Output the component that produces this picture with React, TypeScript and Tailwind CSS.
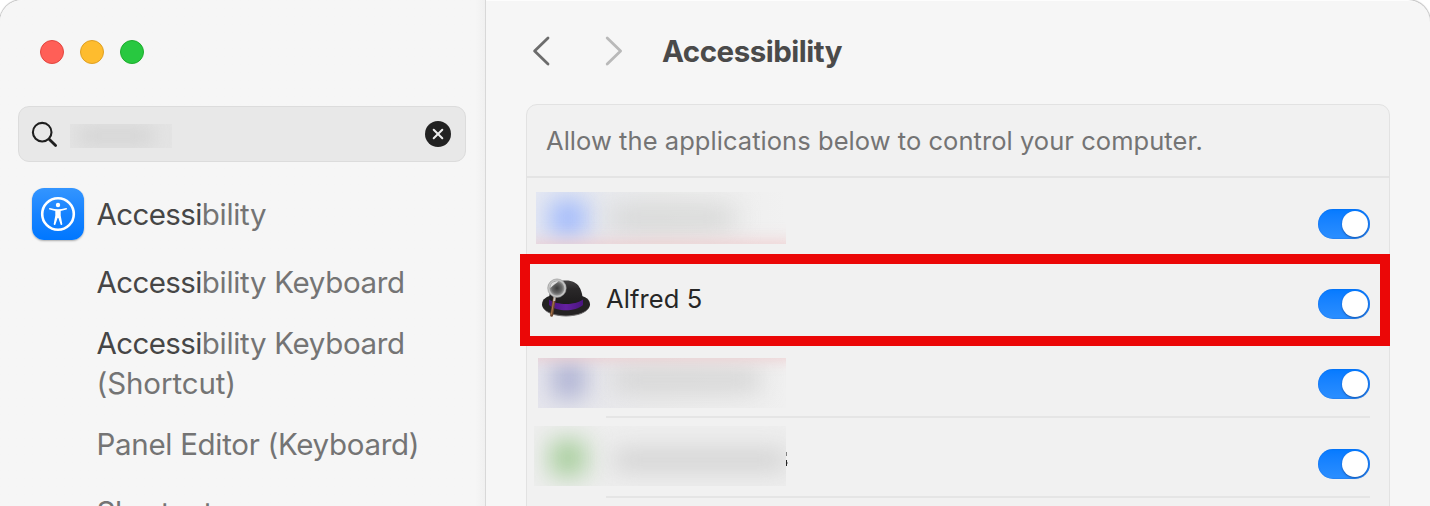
import React from "react";

function Toggle() {
  return (
    <div className="flex h-[30px] w-[52px] shrink-0 items-center justify-end rounded-full bg-linear-to-b from-[#047aff] to-[#2b8fff] pr-[2px] shadow-[inset_0_0_1px_0.5px_rgba(0,90,210,0.35)]">
      <div className="size-[26px] rounded-full bg-white shadow-[0_1px_2px_rgba(0,30,90,0.5)]" />
    </div>
  );
}

function AccessibilityIcon() {
  return (
    <div className="flex size-[52px] shrink-0 items-center justify-center rounded-[12px] bg-linear-to-b from-[#3395ff] via-[#1683ff] to-[#0077ff] shadow-[0_1px_2px_rgba(0,0,0,0.3)]">
      <svg width="36" height="36" viewBox="0 0 36 36" fill="none">
        <circle cx="18" cy="18" r="15.8" stroke="white" strokeWidth="2.6" />
        <circle cx="18" cy="9" r="2.2" fill="white" />
        <path
          d="M9.9 12.1 Q14.5 13.3 18 13.3 Q21.5 13.3 26.1 12.1 A.75 .75 0 0 1 26.4 13.6 L20.7 15 V19.5 L22.3 28 A.9 .9 0 0 1 20.6 28.5 L18.4 22 H17.6 L15.4 28.5 A.9 .9 0 0 1 13.7 28 L15.3 19.5 V15 L9.6 13.6 A.75 .75 0 0 1 9.9 12.1Z"
          fill="white"
        />
      </svg>
    </div>
  );
}

function HatIcon() {
  return (
    <svg width="50" height="42" viewBox="0 0 50 42" fill="none">
      <defs>
        <linearGradient id="crown" x1="0" y1="0" x2="0" y2="1">
          <stop offset="0" stopColor="#454344" />
          <stop offset="0.35" stopColor="#2a2829" />
          <stop offset="1" stopColor="#1c1a1b" />
        </linearGradient>
        <linearGradient id="band" x1="0" y1="0" x2="1" y2="0">
          <stop offset="0" stopColor="#4a1580" />
          <stop offset="0.5" stopColor="#6420a0" />
          <stop offset="1" stopColor="#4a1580" />
        </linearGradient>
        <radialGradient id="lens">
          <stop offset="0" stopColor="#3a3a3a" />
          <stop offset="0.6" stopColor="#686868" />
          <stop offset="1" stopColor="#b5b5b5" />
        </radialGradient>
      </defs>
      <path d="M1 27.5 C1 22 6 19 12 18.5 L38 18.5 C44 19 49 22.5 49 27.5 C49 34 38 39 25 39 C12 39 1 34 1 27.5Z" fill="#242223" />
      <path d="M2 30 C5 35.5 14 38.4 25 38.4 C36 38.4 45 35.5 48 30 C46 36 37 39.4 25 39.4 C13 39.4 4 36 2 30Z" fill="#777576" />
      <path d="M8 28 C7 14 12 3.5 25 3.5 C38 3.5 42 13 42 28Z" fill="url(#crown)" />
      <path d="M8 22.5 C16 28.5 34 28.5 42 22.5 L42 28 C34 35 16 35 8 28Z" fill="url(#band)" />
      <path d="M13.6 20 L10.6 38.2" stroke="#6e4930" strokeWidth="3" strokeLinecap="round" />
      <path d="M13 22 L10.4 37.5" stroke="#b07b4c" strokeWidth="1" />
      <path d="M13.8 19 L13.2 24" stroke="#c6c6c6" strokeWidth="2" />
      <circle cx="16" cy="11.2" r="8.4" fill="url(#lens)" stroke="#c4c4c4" strokeWidth="1.8" />
      <circle cx="16" cy="11.2" r="9.3" stroke="#858585" strokeWidth="0.5" />
      <path d="M9.3 11 C9.5 6 13 4 17.5 4.3 C15 6.5 12 8.5 9.3 11Z" fill="white" fillOpacity="0.75" />
    </svg>
  );
}

function Match({ rest }: { rest: string }) {
  return (
    <>
      <span className="tracking-[-0.6px] text-[#464646]">Accessi</span>
      {rest}
    </>
  );
}

function Sidebar() {
  return (
    <aside className="h-full w-[486px] shrink-0 border-r border-[#d8d8d8] bg-linear-to-r from-[#f6f6f6] from-98% to-[#f0f0f0]">
      <div className="flex gap-4 pt-10 pl-10">
        <div className="size-6 rounded-full border border-[#e2463f] bg-[#ff5f57]" />
        <div className="size-6 rounded-full border border-[#dfa023] bg-[#febc2e]" />
        <div className="size-6 rounded-full border border-[#1dad2c] bg-[#28c840]" />
      </div>
      <div className="mt-[42px] ml-[18px] flex h-14 w-[448px] items-center rounded-[11px] border border-[#dcdcdc] bg-[#e8e8e8] pr-[14px] pl-3">
        <svg className="mt-[2px]" width="28" height="28" viewBox="0 0 28 28" fill="none" stroke="#1f1f1f" strokeLinecap="round">
          <circle cx="11.2" cy="11.2" r="9.3" strokeWidth="2.1" />
          <path d="M18.2 18.2 L24.6 24.6" strokeWidth="2.8" />
        </svg>
        <div className="mt-1 ml-[11px] h-6 w-[102px] overflow-hidden bg-[#e4e4e4]">
          <div className="mt-1 ml-2 h-4 w-[76px] bg-[#d1d1d1] blur-[10px]" />
        </div>
        <svg className="ml-auto" width="26" height="26" viewBox="0 0 26 26">
          <circle cx="13" cy="13" r="13" fill="#222" />
          <path d="M8.7 8.7 L17.3 17.3 M17.3 8.7 L8.7 17.3" stroke="#eee" strokeWidth="2" strokeLinecap="round" />
        </svg>
      </div>
      <div className="mt-[26px] flex items-center gap-[12.5px] pl-8">
        <AccessibilityIcon />
        <div className="text-[29.5px] leading-10 tracking-[-0.33px] whitespace-nowrap"><Match rest="bility" /></div>
      </div>
      <div className="mt-[22px] flex flex-col gap-[21px] pl-[96.5px] text-[29.5px] leading-10 tracking-[-0.33px] whitespace-nowrap">
        <div><Match rest="bility Keyboard" /></div>
        <div>
          <Match rest="bility Keyboard" />
          <br />
          <span className="tracking-[-0.1px]">(Shortcut)</span>
        </div>
        <div className="tracking-[-0.3px]">Panel Editor (Keyboard)</div>
        <div className="pt-[7px]">Shortcut</div>
      </div>
    </aside>
  );
}

function Row({ children, divider = true }: { children: React.ReactNode; divider?: boolean }) {
  return (
    <div className="relative flex h-20 justify-between pr-[19px]">
      {children}
      <div className="pt-[31px]"><Toggle /></div>
      {divider && <div className="absolute right-[19px] bottom-0 left-[79px] h-[2px] bg-[#e5e5e5]" />}
    </div>
  );
}

export default function App() {
  return (
    <div className="h-[506px] w-[1430px] overflow-hidden bg-white font-['Inter',sans-serif] text-[#747474]">
      <div className="relative flex h-full rounded-t-[22px] border-t border-[#fdfdfd] bg-[#f6f6f6] shadow-[0_0_1px_1px_rgba(0,0,0,0.25)]">
        <div className="-mt-px h-[506px] overflow-hidden rounded-tl-[22px]"><Sidebar /></div>
        <main className="-mt-px flex h-[506px] grow flex-col pl-10">
          <header className="flex h-[104px] shrink-0 items-center pb-[2px] pl-[6px]">
            <svg width="20" height="30" viewBox="0 0 20 30" fill="none" stroke="#6c6c6c" strokeWidth="2.8" strokeLinecap="round" strokeLinejoin="round">
              <path d="M16 2 L2.6 15 L16 28" />
            </svg>
            <svg className="ml-[53px]" width="20" height="30" viewBox="0 0 20 30" fill="none" stroke="#b9b9b9" strokeWidth="2.8" strokeLinecap="round" strokeLinejoin="round">
              <path d="M2.2 2 L15.6 15 L2.2 28" />
            </svg>
            <h1 className="ml-[37px] text-[29.5px] leading-10 font-bold tracking-[-0.5px] text-[#4a4a4a]">Accessibility</h1>
          </header>
          <section className="h-[420px] w-[864px] shrink-0 rounded-t-[11px] border border-[#e2e2e2] bg-[#f1f1f1]">
            <div className="flex h-[73px] items-center border-b-2 border-[#e4e4e4] pt-[2px] pl-[19px] text-[25.5px] tracking-[0.05px] whitespace-nowrap">
              Allow the applications below to control your computer.
            </div>
            <Row divider={false}>
              <div className="mt-[14px] ml-[9px] h-[52px] w-[250px] overflow-hidden bg-linear-to-r from-[#e6e9f2] via-[#ebebeb] to-[#f1f1f1]">
                <div className="relative h-full">
                  <div className="absolute top-2 left-[14px] h-9 w-9 bg-[#a0b9fc] blur-[12px]" />
                  <div className="absolute top-4 left-[74px] h-5 w-[124px] bg-[#d2d3d2] blur-[13px]" />
                  <div className="absolute -bottom-3 -left-3 h-3 w-[276px] bg-[#f0c0c3] blur-[9px]" />
                </div>
              </div>
            </Row>
            <Row divider={false}>
              <div className="flex items-start gap-[15px] pt-[19px] pl-[14px]">
                <HatIcon />
                <div className="pt-[6px] text-[25.5px] leading-8 tracking-[0.1px] text-[#262626]">Alfred 5</div>
              </div>
            </Row>
            <Row>
              <div className="mt-[20px] ml-[11px] h-[50px] w-[248px] overflow-hidden bg-linear-to-r from-[#e6e6ed] via-[#ebebeb] to-[#f0f0f0]">
                <div className="relative h-full">
                  <div className="absolute top-1 left-[15px] h-9 w-8 bg-[#abafd2] blur-[12px]" />
                  <div className="absolute top-3 left-[76px] h-5 w-[146px] bg-[#d1d1d1] blur-[12px]" />
                  <div className="absolute -top-3 -left-3 h-3 w-[276px] bg-[#eec4c7] blur-[8px]" />
                </div>
              </div>
            </Row>
            <Row>
              <div className="mt-[8px] ml-[7px] flex">
                <div className="h-[60px] w-[252px] overflow-hidden bg-[#eeeeee]">
                  <div className="relative h-full">
                    <div className="absolute top-[14px] left-4 h-9 w-9 bg-[#a7ce9c] blur-[12px]" />
                    <div className="absolute top-6 left-[80px] h-5 w-[172px] bg-[#cfcfcf] blur-[12px]" />
                  </div>
                </div>
                <svg width="2" height="60" viewBox="0 0 2 60" fill="#262626">
                  <rect x="0" y="26" width="1" height="4" fillOpacity="0.55" />
                  <rect x="0" y="34" width="1" height="6" />
                  <rect x="1" y="36" width="1" height="2" fillOpacity="0.35" />
                </svg>
              </div>
            </Row>
          </section>
        </main>
        <div className="absolute top-[253px] left-[520px] h-[92px] w-[870px] border-[10px] border-[#eb0707]" />
      </div>
    </div>
  );
}
